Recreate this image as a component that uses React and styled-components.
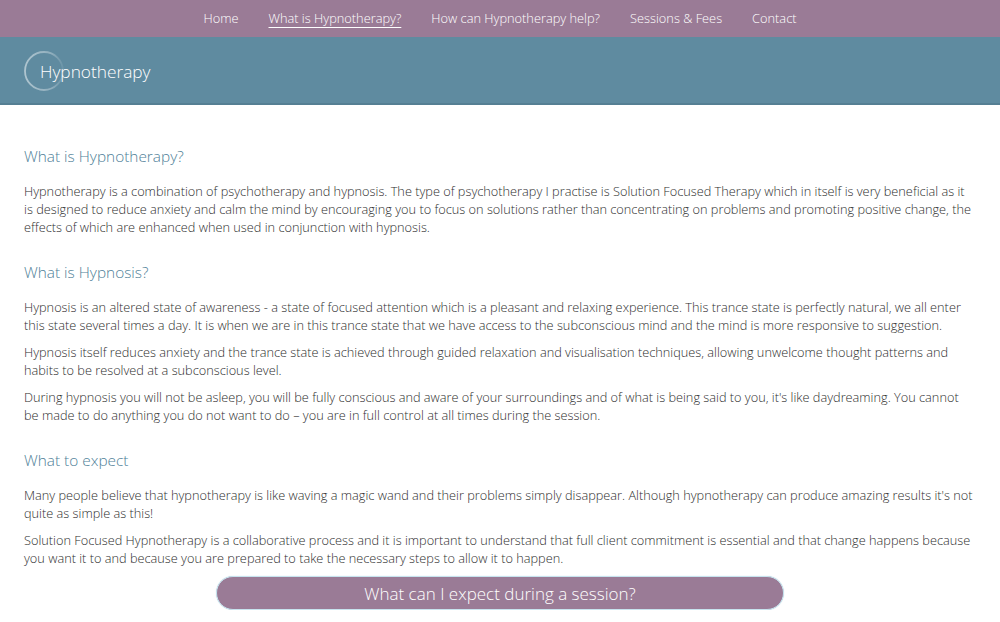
import React from "react";
import styled, { createGlobalStyle } from "styled-components";

const Global = createGlobalStyle`
  html, body { margin: 0; padding: 0; background: #fff; }
  body { font-family: "Open Sans", "Liberation Sans", sans-serif; font-weight: 300; }
  * { box-sizing: border-box; }
`;

const Nav = styled.nav`
  height: 37px;
  background: #9a7b96;
  display: flex;
  justify-content: center;
  align-items: center;
  gap: 30px;
`;

const NavLink = styled.a`
  color: #fff;
  font-size: 12.8px;
  font-weight: 300;
  text-decoration: ${(p) => (p.$active ? "underline" : "none")};
  text-underline-offset: 4px;
  text-decoration-thickness: 1px;
  line-height: 18px;
  padding-bottom: 1px;
`;

const Header = styled.header`
  height: 68px;
  background: #5f8ba0;
  border-bottom: 2px solid #557f93;
  display: flex;
  align-items: center;
  padding-left: 40px;
  position: relative;
`;

const Ring = styled.svg`
  position: absolute;
  left: 23px;
  top: 13px;
`;

const Title = styled.h1`
  margin: 0;
  color: #fff;
  font-size: 17.3px;
  font-weight: 300;
  position: relative;
  top: 1px;
`;

const Main = styled.main`
  padding: 41px 24px 0 24px;
`;

const Heading = styled.h2`
  margin: 0 0 14px 0;
  color: #4f7f98;
  font-size: 15.4px;
  font-weight: 300;
  line-height: 22px;
`;

const Section = styled.section`
  margin-bottom: 26px;
`;

const Para = styled.p`
  margin: 0 0 9px 0;
  color: #2e2e2e;
  font-size: 12.75px;
  line-height: 18px;
`;

const ButtonRow = styled.div`
  display: flex;
  justify-content: center;
  margin-top: -17px;
`;

const Button = styled.a`
  width: 568px;
  height: 34px;
  border-radius: 17px;
  background: #9a7b96;
  border: 1px solid #c7e3ee;
  box-shadow: 0 0 1px #b8d8e6;
  color: #fff;
  font-size: 17px;
  font-weight: 300;
  display: flex;
  align-items: center;
  justify-content: center;
`;

export default function App() {
  return (
    <>
      <Global />
      <Nav>
        <NavLink>Home</NavLink>
        <NavLink $active>What is Hypnotherapy?</NavLink>
        <NavLink>How can Hypnotherapy help?</NavLink>
        <NavLink>Sessions &amp; Fees</NavLink>
        <NavLink>Contact</NavLink>
      </Nav>
      <Header>
        <Ring width="42" height="42" viewBox="0 0 42 42">
          <defs>
            <linearGradient id="rg" x1="0" y1="0" x2="1" y2="0">
              <stop offset="0" stopColor="#ffffff" stopOpacity="0.5" />
              <stop offset="0.7" stopColor="#ffffff" stopOpacity="0.3" />
              <stop offset="1" stopColor="#ffffff" stopOpacity="0.08" />
            </linearGradient>
          </defs>
          <circle cx="21" cy="21" r="19" fill="none" stroke="url(#rg)" strokeWidth="1.8" />
        </Ring>
        <Title>Hypnotherapy</Title>
      </Header>
      <Main>
        <Section>
          <Heading>What is Hypnotherapy?</Heading>
          <Para>
            Hypnotherapy is a combination of psychotherapy and hypnosis. The type of psychotherapy I practise is Solution Focused Therapy which in itself is very beneficial as it is designed to reduce anxiety and calm the mind by encouraging you to focus on solutions rather than concentrating on problems and promoting positive change, the effects of which are enhanced when used in conjunction with hypnosis.
          </Para>
        </Section>
        <Section>
          <Heading>What is Hypnosis?</Heading>
          <Para>
            Hypnosis is an altered state of awareness - a state of focused attention which is a pleasant and relaxing experience. This trance state is perfectly natural, we all enter this state several times a day. It is when we are in this trance state that we have access to the subconscious mind and the mind is more responsive to suggestion.
          </Para>
          <Para>
            Hypnosis itself reduces anxiety and the trance state is achieved through guided relaxation and visualisation techniques, allowing unwelcome thought patterns and habits to be resolved at a subconscious level.
          </Para>
          <Para>
            During hypnosis you will not be asleep, you will be fully conscious and aware of your surroundings and of what is being said to you, it's like daydreaming. You cannot be made to do anything you do not want to do – you are in full control at all times during the session.
          </Para>
        </Section>
        <Section>
          <Heading>What to expect</Heading>
          <Para>
            Many people believe that hypnotherapy is like waving a magic wand and their problems simply disappear. Although hypnotherapy can produce amazing results it's not quite as simple as this!
          </Para>
          <Para>
            Solution Focused Hypnotherapy is a collaborative process and it is important to understand that full client commitment is essential and that change happens because you want it to and because you are prepared to take the necessary steps to allow it to happen.
          </Para>
        </Section>
        <ButtonRow>
          <Button>What can I expect during a session?</Button>
        </ButtonRow>
      </Main>
    </>
  );
}
